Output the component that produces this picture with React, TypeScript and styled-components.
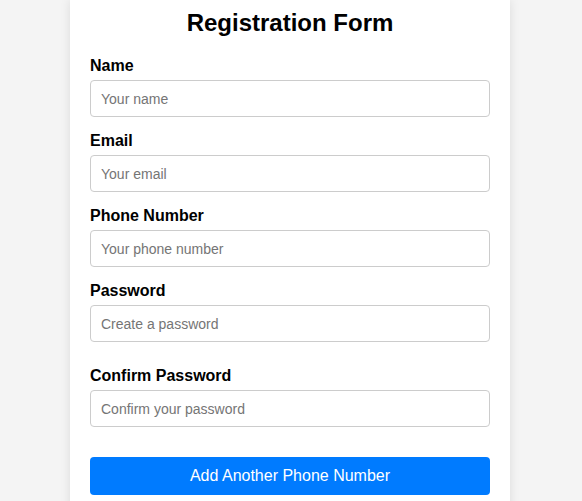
import styled, { createGlobalStyle } from 'styled-components';

const GlobalStyle = createGlobalStyle`
  html, body {
    margin: 0;
    padding: 0;
    background: #f4f4f4;
    font-family: "Liberation Sans", Arial, sans-serif;
  }
`;

const Page = styled.div`
  display: flex;
  justify-content: center;
  padding-right: 2px;
  min-height: 501px;
`;

const Card = styled.form`
  width: 400px;
  padding: 9px 20px 20px;
  background: #fff;
  box-shadow: 0 0 10px rgba(0, 0, 0, 0.1);
`;

const Title = styled.h2`
  margin: 0 0 20px;
  font-size: 24px;
  font-weight: bold;
  text-align: center;
  color: #000;
`;

const Group = styled.div<{ $extra?: boolean }>`
  display: flex;
  flex-direction: column;
  margin-bottom: ${(p) => (p.$extra ? '25px' : '15px')};
`;

const Label = styled.label`
  display: block;
  margin-bottom: 5px;
  font-size: 16px;
  font-weight: bold;
  color: #000;
`;

const Input = styled.input`
  box-sizing: border-box;
  width: 100%;
  height: 37px;
  padding: 9px 10px;
  border: 1px solid #ccc;
  border-radius: 4px;
  font-family: inherit;
  font-size: 14px;
  outline: none;

  &::placeholder {
    color: #757575;
  }
`;

const Button = styled.button`
  box-sizing: border-box;
  width: 100%;
  height: 38px;
  margin-top: 15px;
  padding: 10px;
  border: none;
  border-radius: 4px;
  background: #007bff;
  color: #fff;
  font-family: inherit;
  font-size: 16px;
  line-height: 18px;
  cursor: pointer;
`;

const fields = [
  { label: 'Name', type: 'text', placeholder: 'Your name' },
  { label: 'Email', type: 'email', placeholder: 'Your email' },
  { label: 'Phone Number', type: 'tel', placeholder: 'Your phone number' },
  { label: 'Password', type: 'password', placeholder: 'Create a password', extra: true },
  { label: 'Confirm Password', type: 'password', placeholder: 'Confirm your password' },
];

function App() {
  return (
    <>
      <GlobalStyle />
      <Page>
        <Card onSubmit={(e) => e.preventDefault()}>
          <Title>Registration Form</Title>
          {fields.map((f) => (
            <Group key={f.label} $extra={f.extra}>
              <Label>{f.label}</Label>
              <Input type={f.type} placeholder={f.placeholder} />
            </Group>
          ))}
          <Button type="button">Add Another Phone Number</Button>
        </Card>
      </Page>
    </>
  );
}

export default App;
